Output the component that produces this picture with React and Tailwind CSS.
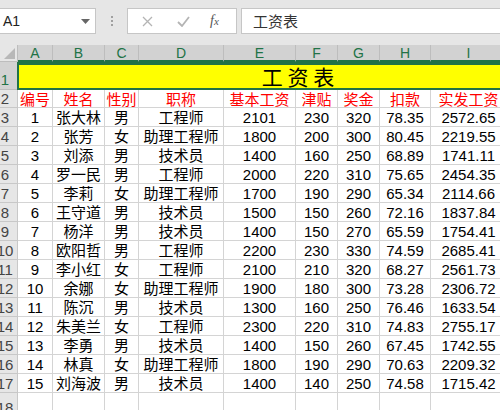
import React from 'react'

const rows = [
  [1, '张大林', '男', '工程师', 2101, 230, 320, '78.35', '2572.65'],
  [2, '张芳', '女', '助理工程师', 1800, 200, 300, '80.45', '2219.55'],
  [3, '刘添', '男', '技术员', 1400, 160, 250, '68.89', '1741.11'],
  [4, '罗一民', '男', '工程师', 2000, 220, 310, '75.65', '2454.35'],
  [5, '李莉', '女', '助理工程师', 1700, 190, 290, '65.34', '2114.66'],
  [6, '王守道', '男', '技术员', 1500, 150, 260, '72.16', '1837.84'],
  [7, '杨洋', '男', '技术员', 1400, 150, 270, '65.59', '1754.41'],
  [8, '欧阳哲', '男', '工程师', 2200, 230, 330, '74.59', '2685.41'],
  [9, '李小红', '女', '工程师', 2100, 210, 320, '68.27', '2561.73'],
  [10, '余娜', '女', '助理工程师', 1900, 180, 300, '73.28', '2306.72'],
  [11, '陈沉', '男', '技术员', 1300, 160, 250, '76.46', '1633.54'],
  [12, '朱美兰', '女', '工程师', 2300, 220, 310, '74.83', '2755.17'],
  [13, '李勇', '男', '技术员', 1400, 150, 260, '67.45', '1742.55'],
  [14, '林真', '女', '助理工程师', 1800, 190, 290, '70.63', '2209.32'],
  [15, '刘海波', '男', '技术员', 1400, 140, 250, '74.58', '1715.42'],
]

const headers = ['编号', '姓名', '性别', '职称', '基本工资', '津贴', '奖金', '扣款', '实发工资']
const letters = ['A', 'B', 'C', 'D', 'E', 'F', 'G', 'H', 'I']

function RowHead({ n, selected, tall }) {
  return (
    <div
      className={`overflow-hidden border-b border-r flex leading-[17px] ${tall ? 'items-end pb-[1px]' : 'items-center'} ${
        selected ? 'bg-[#d2d2d2] border-r-[#217346] border-b-[#bdbdbd] text-[#217346]' : 'bg-[#e6e6e6] border-[#c8c8c8] text-[#444]'
      } text-[15px]`}
    >
      <div className="w-[10px] flex justify-center shrink-0">
        <span className="whitespace-nowrap">{n}</span>
      </div>
    </div>
  )
}

function Cell({ children, red }) {
  return (
    <div
      className={`border-b border-r border-[#d4d4d4] flex items-center justify-center whitespace-nowrap text-[15px] leading-[17px] ${
        red ? 'text-[#ff0000]' : 'text-black'
      }`}
    >
      {children}
    </div>
  )
}

export default function App() {
  return (
    <div className="w-[500px] h-[410px] overflow-hidden bg-white font-['Liberation_Sans','Noto_Sans_CJK_SC',sans-serif]">
      {/* formula bar */}
      <div className="h-[45px] bg-[#e6e6e6] flex items-start pt-2">
        <div className="w-[96px] h-[26px] bg-white border border-[#c6c6c6] border-l-0 flex items-center justify-between pl-[3px] pr-[5px]">
          <span className="text-[14px] text-[#222]">A1</span>
          <svg width="9" height="5" viewBox="0 0 9 5">
            <path d="M0 0 L9 0 L4.5 5 Z" fill="#666" />
          </svg>
        </div>
        <div className="w-[31px] h-[26px] flex flex-col items-center justify-center gap-[2px]">
          <span className="w-[2px] h-[2px] bg-[#a0a0a0]" />
          <span className="w-[2px] h-[2px] bg-[#a0a0a0]" />
          <span className="w-[2px] h-[2px] bg-[#a0a0a0]" />
        </div>
        <div className="w-[110px] h-[26px] bg-white border border-[#c6c6c6] flex items-center">
          <svg className="ml-[14px]" width="11" height="11" viewBox="0 0 11 11">
            <path d="M1 1 L10 10 M10 1 L1 10" stroke="#b4b4b4" strokeWidth="1.3" />
          </svg>
          <svg className="ml-[24px]" width="13" height="11" viewBox="0 0 13 11">
            <path d="M1 6 L5 10 L12 1" stroke="#b4b4b4" strokeWidth="1.8" fill="none" />
          </svg>
          <span className="ml-[20px] text-[14px] italic font-['Liberation_Serif',serif] text-[#555] leading-none">
            f<span className="text-[11px]">x</span>
          </span>
        </div>
        <div className="ml-[4px] flex-1 h-[26px] bg-white border border-[#c6c6c6] border-r-0 flex items-center pl-[11px]">
          <span className="text-[15px] text-[#333] font-['Noto_Sans_CJK_SC',sans-serif]">工资表</span>
        </div>
      </div>

      {/* sheet */}
      <div className="grid w-[507px] grid-cols-[18px_35px_52px_34px_85px_72px_42px_42px_51px_76px] grid-rows-[17px_28px_18px_repeat(15,19px)_30px]">
        {/* corner */}
        <div className="bg-[#e6e6e6] border-r border-b border-[#bdbdbd] flex items-end justify-end pr-[2px] pb-[2px]">
          <svg width="11" height="11" viewBox="0 0 11 11">
            <path d="M11 0 L11 11 L0 11 Z" fill="#b8b8b8" />
          </svg>
        </div>
        {letters.map((l) => (
          <div
            key={l}
            className="bg-[#d2d2d2] border-r border-r-[#bdbdbd] border-b-2 border-b-[#217346] flex items-center justify-center text-[14px] leading-none text-[#217346]"
          >
            {l}
          </div>
        ))}

        {/* row 1 */}
        <RowHead n={1} selected tall />
        <div className="col-span-9 -ml-px bg-[#ffff00] border-2 border-t-[3px] border-[#217346] flex items-center justify-center pl-[72px]">
          <span className="block text-[21px] leading-[21px] text-black font-['Noto_Sans_CJK_SC',sans-serif] whitespace-pre">工 资 表</span>
        </div>

        {/* row 2 */}
        <RowHead n={2} />
        {headers.map((h) => (
          <Cell key={h} red>
            <span className="block leading-[17px] font-['Noto_Sans_CJK_SC',sans-serif]">{h}</span>
          </Cell>
        ))}

        {rows.map((r, i) => (
          <React.Fragment key={r[0]}>
            <RowHead n={i + 3} />
            {r.map((v, j) => (
              <Cell key={j}>{v}</Cell>
            ))}
          </React.Fragment>
        ))}

        {/* row 18 */}
        <RowHead n={18} />
        {letters.map((l) => (
          <Cell key={'e' + l} />
        ))}
      </div>
    </div>
  )
}
